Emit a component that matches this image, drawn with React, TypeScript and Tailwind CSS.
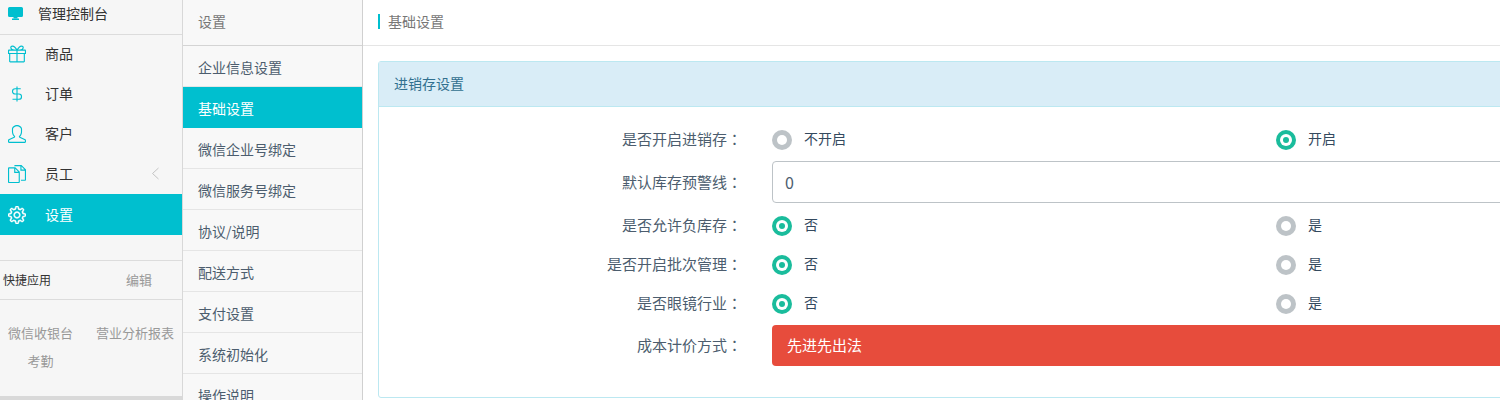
import { SlDocs, SlPresent, SlSettings, SlUser } from 'react-icons/sl'

const font = '[font-family:"Noto_Sans_CJK_SC","Liberation_Sans",sans-serif]'

function Monitor() {
  return (
    <svg width="15" height="13" viewBox="0 0 15 13" fill="#00bfcf">
      <path d="M1.500 0h12A1.500 1.500 0 0 1 15 1.500v7a1.500 1.500 0 0 1-1.500 1.500h-12A1.500 1.500 0 0 1 0 8.500v-7A1.500 1.500 0 0 1 1.500 0z" />
      <path d="M5.500 10h4v1.500h-4z" />
      <path d="M4 11.500h7V13H4z" />
    </svg>
  )
}

function Dollar() {
  return (
    <svg width="18" height="18" viewBox="0 0 24 24" fill="none" stroke="#00bfcf" strokeWidth="1.500">
      <path d="M12 2v20" />
      <path d="M17 5H9.500a3.500 3.500 0 0 0 0 7h5a3.500 3.500 0 0 1 0 7H6" />
    </svg>
  )
}

const navItems = [
  { label: '商品', icon: <SlPresent size={18} color="#00bfcf" /> },
  { label: '订单', icon: <Dollar /> },
  { label: '客户', icon: <SlUser size={18} color="#00bfcf" /> },
  { label: '员工', icon: <SlDocs size={18} color="#00bfcf" />, arrow: true },
  { label: '设置', icon: <SlSettings size={18} color="#ffffff" stroke="#ffffff" strokeWidth={24} />, active: true },
]

const subItems = ['企业信息设置', '基础设置', '微信企业号绑定', '微信服务号绑定', '协议/说明', '配送方式', '支付设置', '系统初始化', '操作说明']

function Radio({ on, label }: { on?: boolean; label: string }) {
  return (
    <div className="flex items-center gap-[12px]">
      <span className={`flex h-[20px] w-[20px] items-center justify-center rounded-full ${on ? 'bg-[#1abc9c]' : 'bg-[#bdc3c7]'}`}>
        <span className={`flex items-center justify-center rounded-full bg-white ${on ? 'h-[12px] w-[12px]' : 'h-[10px] w-[10px]'}`}>
          {on && <span className="h-[6px] w-[6px] rounded-full bg-[#1abc9c]" />}
        </span>
      </span>
      <span className="pb-[2px] text-[14px] text-[#34495e]">{label}</span>
    </div>
  )
}

function Row({ label, children, className }: { label: string; children: React.ReactNode; className?: string }) {
  return (
    <div className={`flex items-center ${className ?? ''}`}>
      <div className="w-[363px] shrink-0 text-right text-[15px] text-[#4c5d6e]">
        {label}
        <span className="[font-family:'Noto_Sans_CJK_TC',sans-serif]">：</span>
      </div>
      <div className="ml-[30px] min-w-0 flex-1">{children}</div>
    </div>
  )
}

function RadioRow({ label, a, b, second }: { label: string; a: string; b: string; second?: boolean }) {
  return (
    <Row label={label} className="h-[39px]">
      <div className="flex">
        <div className="w-[504px]"><Radio on={!second} label={a} /></div>
        <Radio on={second} label={b} />
      </div>
    </Row>
  )
}

export default function App() {
  return (
    <div className={`flex h-[400px] w-[1500px] overflow-hidden bg-white ${font}`}>
      <aside className="relative h-[400px] w-[183px] shrink-0 border-r border-[#d8d8d8] bg-[#f6f6f6]">
        <div className="flex h-[35px] items-center gap-[15px] border-b border-[#dcdcdc] pb-[7px] pl-[8px] text-[14px] text-[#333]">
          <Monitor />
          管理控制台
        </div>
        <nav className="-mt-px">
          {navItems.map((item) => (
            <div key={item.label} className={`relative flex items-center gap-[19px] pl-[8px] text-[14px] ${item.active ? 'h-[41px] bg-[#00bfcf] text-white' : 'h-[40px] text-[#333]'}`}>
              {item.icon}
              <span className="pb-[1px]">{item.label}</span>
              {item.arrow && (
                <svg className="absolute left-[151px] top-[13px]" width="9" height="13" viewBox="0 0 9 13" fill="none" stroke="#c4c4c4" strokeWidth="1">
                  <path d="M7.500 1 1.500 6.500 7.500 12" />
                </svg>
              )}
            </div>
          ))}
        </nav>
        <div className="mt-[25px] flex h-[40px] items-center border-y border-[#dcdcdc]">
          <span className="pl-[3px] text-[12px] text-[#333]">快捷应用</span>
          <span className="ml-[75px] text-[13px] text-[#999]">编辑</span>
        </div>
        <div className="flex flex-wrap pt-[19px] text-[13px] leading-[28px] text-[#999]">
          <span className="w-[81px] text-center">微信收银台</span>
          <span className="whitespace-nowrap pl-[15px]">营业分析报表</span>
          <span className="w-[81px] text-center">考勤</span>
        </div>
        <div className="absolute bottom-0 left-0 h-[4px] w-full bg-[#d9d9d9]" />
      </aside>

      <section className="h-[400px] w-[180px] shrink-0 overflow-hidden border-r border-[#d0d0d0] bg-[#f8f8f8]">
        <div className="flex h-[46px] items-center border-b border-[#d4d4d4] pb-[2px] pl-[15px] text-[14px] text-[#777]">设置</div>
        {subItems.map((item) => (
          <div key={item} className={`flex h-[41px] shrink-0 items-center pl-[15px] pt-[2px] text-[14px] ${item === '基础设置' ? 'bg-[#00bfcf] text-white' : 'border-b border-[#e5e5e5] text-[#4c5d6e]'}`}>
            {item}
          </div>
        ))}
      </section>

      <main className="min-w-0 flex-1">
        <div className="flex h-[46px] items-center border-b border-[#e5e5e5] pb-[2px] pl-[15px]">
          <span className="border-l-2 border-[#00bfcf] pl-[8px] text-[14px] leading-[15px] text-[#777]">基础设置</span>
        </div>
        <div className="ml-[15px] mt-[15px] h-[337px] w-[1300px] rounded-[3px] border border-[#bce8f1]">
          <div className="flex h-[45px] items-center border-b border-[#bce8f1] bg-[#d9edf7] pb-[2px] pl-[15px] text-[14px] text-[#31708f]">进销存设置</div>
          <div className="pt-[13px]">
            <RadioRow label="是否开启进销存" a="不开启" b="开启" second />
            <Row label="默认库存预警线" className="mt-[2px] h-[42px]">
              <div className="flex h-[42px] items-center rounded-[4px] border border-[#bdc3c7] pl-[12px] text-[16px] text-[#4c5d6e]">0</div>
            </Row>
            <div className="pt-[3px]">
              <RadioRow label="是否允许负库存" a="否" b="是" />
              <RadioRow label="是否开启批次管理" a="否" b="是" />
              <RadioRow label="是否眼镜行业" a="否" b="是" />
            </div>
            <Row label="成本计价方式" className="mt-[2px] h-[41px]">
              <div className="flex h-[41px] items-center rounded-[4px] bg-[#e74c3c] pb-[1px] pl-[15px] text-[15px] text-white">先进先出法</div>
            </Row>
          </div>
        </div>
      </main>
    </div>
  )
}
